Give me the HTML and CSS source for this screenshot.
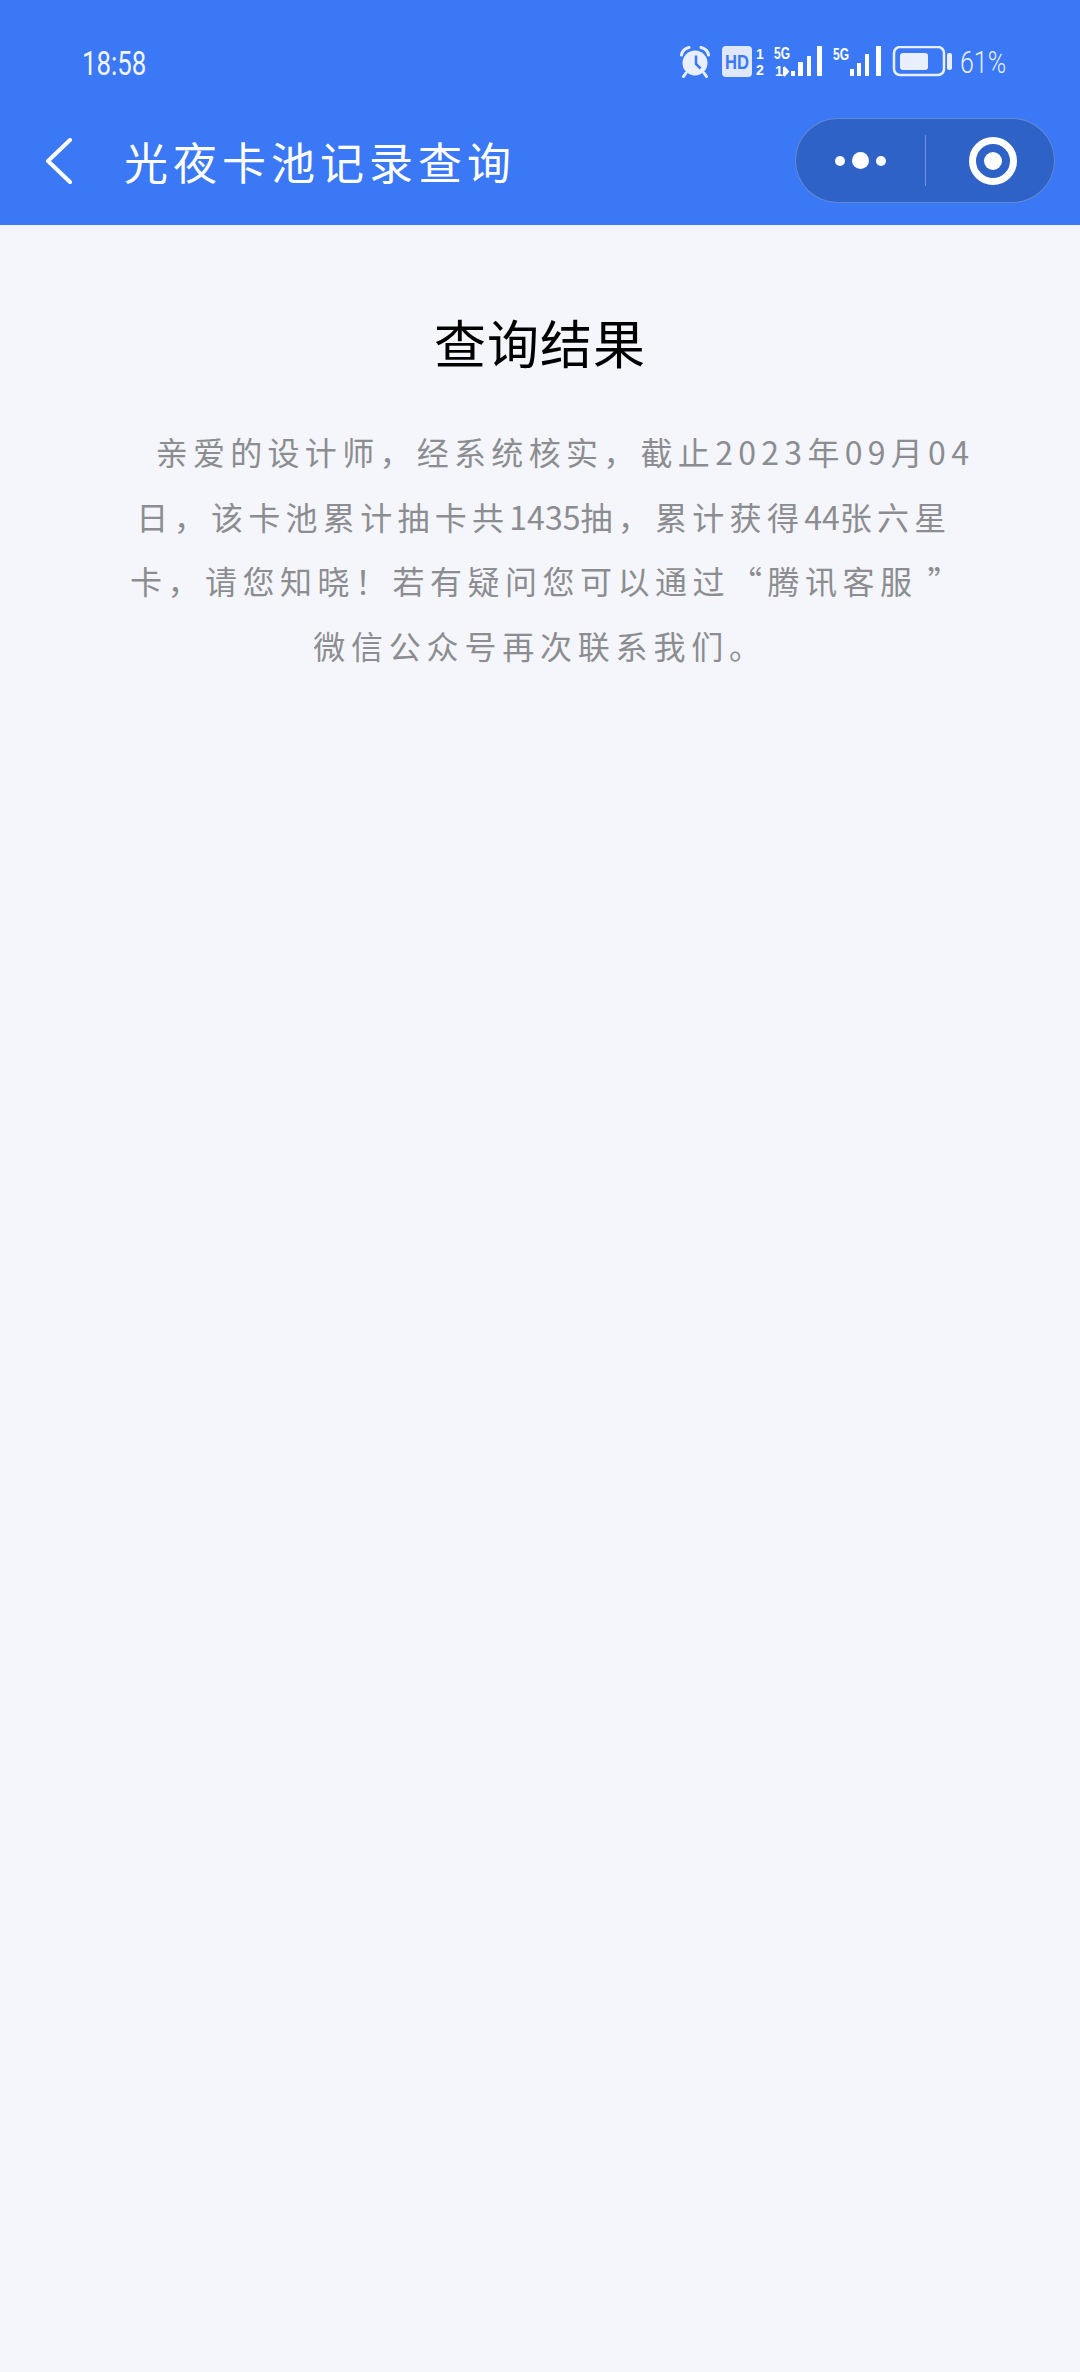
FILE: index.html
```html
<html>
<head>
<title>光夜卡池记录查询</title>
<link rel="stylesheet" href="styles.css">
</head>
<body>
<div class="header">
    <div class="status-bar">
        <span class="time">18:58</span>
        <div class="status-icons">
            <svg width="32" height="32" viewBox="0 0 32 32">
                <circle cx="15" cy="17" r="12.5" fill="#e9effd"/>
                <path d="M1.5 9 Q2.5 3 9 1.5 M28.5 9 Q27.5 3 21 1.5" stroke="#e9effd" stroke-width="3" stroke-linecap="round" fill="none"/>
                <path d="M6 27 L3.5 30.5 M24 27 L26.5 30.5" stroke="#e9effd" stroke-width="3" stroke-linecap="round" fill="none"/>
                <path d="M16 9.5 V18 L20.5 22.5" stroke="#3a78f6" stroke-width="2.5" fill="none"/>
            </svg>
            <svg width="42" height="32" viewBox="0 0 42 32">
                <rect x="0" y="0" width="30" height="31" rx="4" fill="#dfe8fc"/>
                <text x="3" y="23" class="hd-text" textLength="24" lengthAdjust="spacingAndGlyphs">HD</text>
                <text x="38" y="13" class="sim-text" text-anchor="middle">1</text>
                <text x="38" y="29" class="sim-text" text-anchor="middle">2</text>
            </svg>
            <svg width="54" height="32" viewBox="0 0 54 32">
                <text x="0" y="13" class="net-text" textLength="16" lengthAdjust="spacingAndGlyphs">5G</text>
                <text x="1" y="30" class="sim-text">1</text>
                <path d="M10 21 V30 M10 21 L14 25.5 L10 30" stroke="#fff" stroke-width="2" fill="#fff"/>
                <rect x="17" y="25" width="4" height="5" fill="#fff"/>
                <rect x="24" y="16" width="5" height="14" fill="#fff"/>
                <rect x="33" y="10" width="4" height="20" fill="#fff"/>
                <rect x="43" y="0" width="5" height="30" fill="#fff"/>
            </svg>
            <svg class="signal-two" width="48" height="32" viewBox="0 0 48 32">
                <text x="0" y="14" class="net-text" textLength="16" lengthAdjust="spacingAndGlyphs">5G</text>
                <rect x="17" y="23" width="4" height="7" fill="#fff"/>
                <rect x="24" y="17" width="4" height="13" fill="#fff"/>
                <rect x="32" y="8" width="4" height="22" fill="#fff"/>
                <rect x="43" y="0" width="5" height="30" fill="#fff"/>
            </svg>
            <svg width="62" height="32" viewBox="0 0 62 32">
                <rect x="3" y="1" width="50" height="28" rx="6" fill="none" stroke="#e9effd" stroke-width="2.5"/>
                <rect x="9" y="7" width="28" height="17" rx="3" fill="#e9effd"/>
                <rect x="56" y="7" width="5" height="17" rx="2" fill="#e9effd"/>
            </svg>
            <span class="battery-pct">61%</span>
        </div>
    </div>
    <div class="nav-bar">
        <svg class="back" width="30" height="46" viewBox="0 0 30 46">
            <path d="M26 2 L4 23 L26 44" fill="none" stroke="#fff" stroke-width="4" stroke-linecap="round" stroke-linejoin="round"/>
        </svg>
        <span class="nav-title">光夜卡池记录查询</span>
        <div class="capsule">
            <div class="capsule-more">
                <i class="dot"></i><i class="dot dot-big"></i><i class="dot"></i>
            </div>
            <div class="capsule-close"><i class="target"></i></div>
        </div>
    </div>
</div>

<div class="content">
    <h2 class="result-title">查询结果</h2>
    <div class="result-text">
        <div>&nbsp;&nbsp;&nbsp;&nbsp;亲爱的设计师，经系统核实，截止2023年09月04</div>
        <div class="line-two">日，该卡池累计抽卡共<span class="num">1435</span>抽，累计获得<span class="num">44</span>张六星</div>
        <div class="line-three">卡，请您知晓！若有疑问您可以通过“腾讯客服<span class="close-quote">”</span></div>
        <div class="line-four">微信公众号再次联系我们。</div>
    </div>
</div>
</body>
</html>
```

FILE: styles.css
```css
body {
    margin: 0;
    padding: 0;
    width: 1080px;
    min-height: 2372px;
    background-color: #f5f6fb;
    font-family: "Noto Sans CJK SC", "Noto Sans", sans-serif;
}

.header {
    height: 225px;
    background-color: #3a78f6;
    color: white;
}

.status-bar {
    height: 118px;
    display: flex;
    justify-content: space-between;
    align-items: center;
    padding: 6px 76px 0 82px;
    box-sizing: border-box;
}

.time {
    width: 64px;
    margin-top: 1px;
    white-space: nowrap;
    font-family: Roboto, sans-serif;
    font-size: 34px;
    color: #f0f4fe;
    transform: scaleX(0.76);
    transform-origin: left center;
}

.status-icons {
    display: flex;
    align-items: center;
    gap: 10px;
}

.status-icons svg {
    display: block;
}

.signal-two {
    margin-left: -5px;
}

.hd-text {
    font-family: "Liberation Sans", sans-serif;
    font-weight: bold;
    font-size: 21px;
    fill: #3a78f6;
}

.sim-text {
    font-family: "Liberation Sans", sans-serif;
    font-weight: bold;
    font-size: 14px;
    fill: #fff;
}

.net-text {
    font-family: "Liberation Sans", sans-serif;
    font-weight: bold;
    font-size: 16px;
    fill: #fff;
}

.battery-pct {
    width: 44px;
    margin-left: -3px;
    white-space: nowrap;
    font-family: Roboto, sans-serif;
    font-weight: 300;
    font-size: 32px;
    color: #e9effd;
    transform: scaleX(0.78);
    transform-origin: left center;
}

.nav-bar {
    height: 85px;
    display: flex;
    align-items: center;
    padding: 0 25px 0 44px;
}

.back {
    display: block;
}

.nav-title {
    font-size: 44px;
    letter-spacing: 5px;
    margin-left: 50px;
}

.capsule {
    margin-left: auto;
    width: 260px;
    height: 85px;
    box-sizing: border-box;
    display: flex;
    align-items: center;
    background: #2e62c6;
    border: 1px solid rgba(255, 255, 255, 0.25);
    border-radius: 43px;
}

.capsule-more {
    width: 130px;
    height: 51px;
    display: flex;
    align-items: center;
    justify-content: center;
    gap: 7px;
    border-right: 1px solid rgba(255, 255, 255, 0.3);
    box-sizing: border-box;
}

.dot {
    display: block;
    width: 10px;
    height: 10px;
    border-radius: 50%;
    background: white;
}

.dot-big {
    width: 17px;
    height: 17px;
}

.capsule-close {
    flex: 1;
    padding-left: 5px;
    display: flex;
    align-items: center;
    justify-content: center;
}

.target {
    display: block;
    box-sizing: border-box;
    width: 48px;
    height: 48px;
    border: 7px solid white;
    border-radius: 50%;
    position: relative;
}

.target::after {
    content: "";
    position: absolute;
    left: 8px;
    top: 8px;
    width: 18px;
    height: 18px;
    border-radius: 50%;
    background: white;
}

.content {
    padding-top: 81px;
    text-align: center;
}

.result-title {
    margin: 0;
    font-size: 52px;
    line-height: 72px;
    letter-spacing: 1px;
    font-weight: normal;
    color: black;
}

.result-text {
    margin-top: 41px;
    font-size: 32px;
    line-height: 64.5px;
    letter-spacing: 5.3px;
    color: #8b8d91;
}

.num {
    letter-spacing: 0;
}

.line-two {
    padding-left: 8px;
}

.line-three {
    letter-spacing: 5.5px;
    padding-left: 15px;
}

.line-four {
    letter-spacing: 5.8px;
}

.close-quote {
    margin-left: 10px;
}
```
